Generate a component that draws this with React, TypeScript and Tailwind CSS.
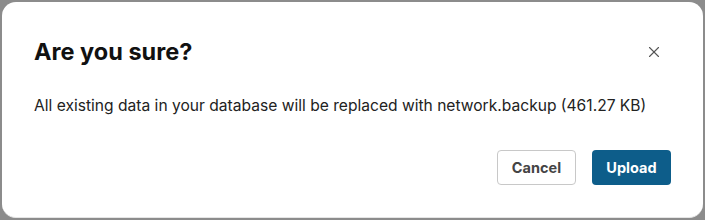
import { X } from "lucide-react";

export default function App() {
    return (
        <div className="w-[705px] h-[220px] bg-[#8c8c8c] p-[2px] font-['Inter',sans-serif]">
            <div className="flex flex-col h-full w-full bg-white rounded-[14px] px-8 pt-[30px] pb-8 border-b border-[#e5e5e5]">
                <div className="flex flex-row items-center justify-between">
                    <h1 className="text-[23.5px] font-bold text-[#111] leading-[40px]">Are you sure?</h1>
                    <button type="button" className="text-[#555] mr-[8px]">
                        <X size={18} strokeWidth={1.5} />
                    </button>
                </div>
                <p className="mt-[22px] text-[15.6px] text-[#222] leading-6">
                    All existing data in your database will be replaced with network.backup (461.27 KB)
                </p>
                <div className="flex flex-row justify-end gap-4 mt-auto">
                    <button type="button" className="h-[35px] w-[79px] rounded-[4px] border border-[#c8c8c8] text-[#444] text-[14.5px] font-bold">
                        Cancel
                    </button>
                    <button type="button" className="h-[35px] w-[79px] rounded-[4px] bg-[#0d5d8a] text-white text-[14.5px] font-bold">
                        Upload
                    </button>
                </div>
            </div>
        </div>
    );
}
